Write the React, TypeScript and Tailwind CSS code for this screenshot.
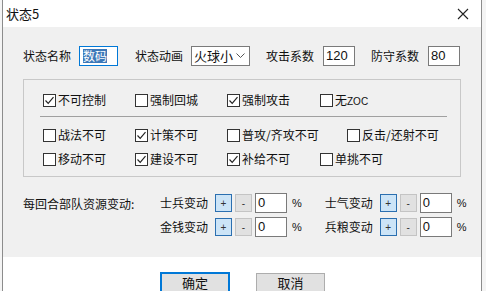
import React from "react";

const FONT = {
  fontFamily: '"Noto Sans CJK SC", "Microsoft YaHei", sans-serif',
};
const LATIN = {
  fontFamily: '"Liberation Sans", "Noto Sans CJK SC", sans-serif',
};

function Box({ checked }: { checked: boolean }) {
  return (
    <span className="flex h-[13px] w-[13px] shrink-0 items-center justify-center border border-[#333] bg-white">
      {checked && (
        <svg width="11" height="11" viewBox="0 0 11 11">
          <path d="M1.5 5.5 L4.2 8.3 L9.5 2.2" fill="none" stroke="#222" strokeWidth="1.2" />
        </svg>
      )}
    </span>
  );
}

function Check({ label, checked, w }: { label: React.ReactNode; checked?: boolean; w: string }) {
  return (
    <div className={`flex items-center gap-[2px] ${w}`}>
      <Box checked={!!checked} />
      <span className="whitespace-nowrap text-[12px] leading-none text-[#111]">{label}</span>
    </div>
  );
}

function Field({ value, w }: { value: string; w: string }) {
  return (
    <div
      className={`flex h-[20px] ${w} items-center border border-[#7a7a7a] bg-white pl-[2px] text-[13px] text-[#111]`}
      style={LATIN}
    >
      {value}
    </div>
  );
}

function Stepper({ label }: { label: string }) {
  return (
    <div className="flex items-center">
      <span className="w-[52px] whitespace-nowrap text-[12px] leading-none text-[#111]">{label}</span>
      <div className="ml-[3px] flex h-[18px] w-[17px] items-center justify-center border border-[#2b6fb0] bg-[#cce4f7] text-[10px] text-[#333]" style={LATIN}>
        +
      </div>
      <div className="ml-[3px] flex h-[18px] w-[17px] items-center justify-center border border-[#c4c4c4] bg-[#e1e1e1] text-[10px] text-[#333]" style={LATIN}>
        -
      </div>
      <div className="ml-[3px]">
        <Field value="0" w="w-[32px]" />
      </div>
      <span className="ml-[5px] text-[11px] text-[#111]" style={LATIN}>
        %
      </span>
    </div>
  );
}

export default function App() {
  return (
    <div className="relative h-[291px] w-[486px] overflow-hidden bg-[#f4f4f4]" style={FONT}>
      <div className="ml-[2px] flex h-full w-[480px] flex-col border-x border-[#8c8c8c]">
        {/* title bar */}
        <div className="flex h-[27px] shrink-0 items-center justify-between bg-white pl-[3px] pr-[12px]">
          <span className="text-[13px] text-[#111]">状态5</span>
          <svg width="12" height="12" viewBox="0 0 12 12">
            <path d="M1 1 L11 11 M11 1 L1 11" stroke="#222" strokeWidth="1.1" />
          </svg>
        </div>

        {/* body */}
        <div className="flex h-[230px] shrink-0 flex-col bg-[#f0f0f0] pl-[20px] pt-[19px]">
          <div className="flex h-[20px] items-center">
            <span className="w-[56px] text-[12px] text-[#111]">状态名称</span>
            <div className="flex h-[20px] w-[39px] items-center border border-[#0078d7] bg-white pl-[3px]">
              <span className="bg-[#3d78b8] text-[12px] leading-[14px] text-white">数码</span>
            </div>
            <span className="ml-[17px] w-[56px] text-[12px] text-[#111]">状态动画</span>
            <div className="flex h-[20px] w-[59px] items-center justify-between border border-[#7a7a7a] bg-white pl-[2px] pr-[4px]">
              <span className="text-[13px] text-[#111]">火球小</span>
              <svg width="9" height="6" viewBox="0 0 9 6">
                <path d="M0.5 0.5 L4.5 4.5 L8.5 0.5" fill="none" stroke="#555" strokeWidth="1" />
              </svg>
            </div>
            <span className="ml-[16px] w-[57px] text-[12px] text-[#111]">攻击系数</span>
            <Field value="120" w="w-[32px]" />
            <span className="ml-[16px] w-[57px] text-[12px] text-[#111]">防守系数</span>
            <Field value="80" w="w-[32px]" />
          </div>

          {/* group box */}
          <div className="mt-[13px] flex h-[98px] w-[438px] flex-col border border-[#c8c8c8] pl-[19px] pt-[10px]">
            <div className="flex h-[20px] items-center">
              <Check w="w-[92px]" checked label="不可控制" />
              <Check w="w-[92px]" label="强制回城" />
              <Check w="w-[93px]" checked label="强制攻击" />
              <Check
                w="w-[80px]"
                label={
                  <>
                    无<span className="text-[10px]" style={LATIN}>ZOC</span>
                  </>
                }
              />
            </div>
            <div className="ml-[-3px] mt-[6px] h-px w-[407px] bg-[#a0a0a0]" />
            <div className="mt-[8px] flex h-[20px] items-center">
              <Check w="w-[92px]" label="战法不可" />
              <Check w="w-[92px]" checked label="计策不可" />
              <Check w="w-[120px]" label="普攻/齐攻不可" />
              <Check w="w-[110px]" label="反击/还射不可" />
            </div>
            <div className="mt-[4px] flex h-[20px] items-center">
              <Check w="w-[92px]" label="移动不可" />
              <Check w="w-[92px]" checked label="建设不可" />
              <Check w="w-[93px]" checked label="补给不可" />
              <Check w="w-[80px]" label="单挑不可" />
            </div>
          </div>

          {/* resources */}
          <div className="mt-[16px] flex">
            <span className="mt-[5px] w-[137px] whitespace-nowrap text-[12px] leading-none text-[#111]">每回合部队资源变动:</span>
            <div className="flex flex-col gap-[4px]">
              <div className="flex items-center gap-[23px]">
                <Stepper label="士兵变动" />
                <Stepper label="士气变动" />
              </div>
              <div className="flex items-center gap-[23px]">
                <Stepper label="金钱变动" />
                <Stepper label="兵粮变动" />
              </div>
            </div>
          </div>
        </div>

        {/* footer */}
        <div className="flex flex-1 items-start bg-white pl-[157px] pt-[15px]">
          <div className="flex h-[24px] w-[70px] items-start justify-center border-2 border-[#0078d7] bg-[#e1e1e1] pt-[1px] text-[13px] leading-[16px] text-[#111]">
            确定
          </div>
          <div className="ml-[26px] mt-[1px] flex h-[23px] w-[69px] items-start justify-center border border-[#adadad] bg-[#e1e1e1] pt-[1px] text-[13px] leading-[16px] text-[#111]">
            取消
          </div>
        </div>
      </div>
    </div>
  );
}
